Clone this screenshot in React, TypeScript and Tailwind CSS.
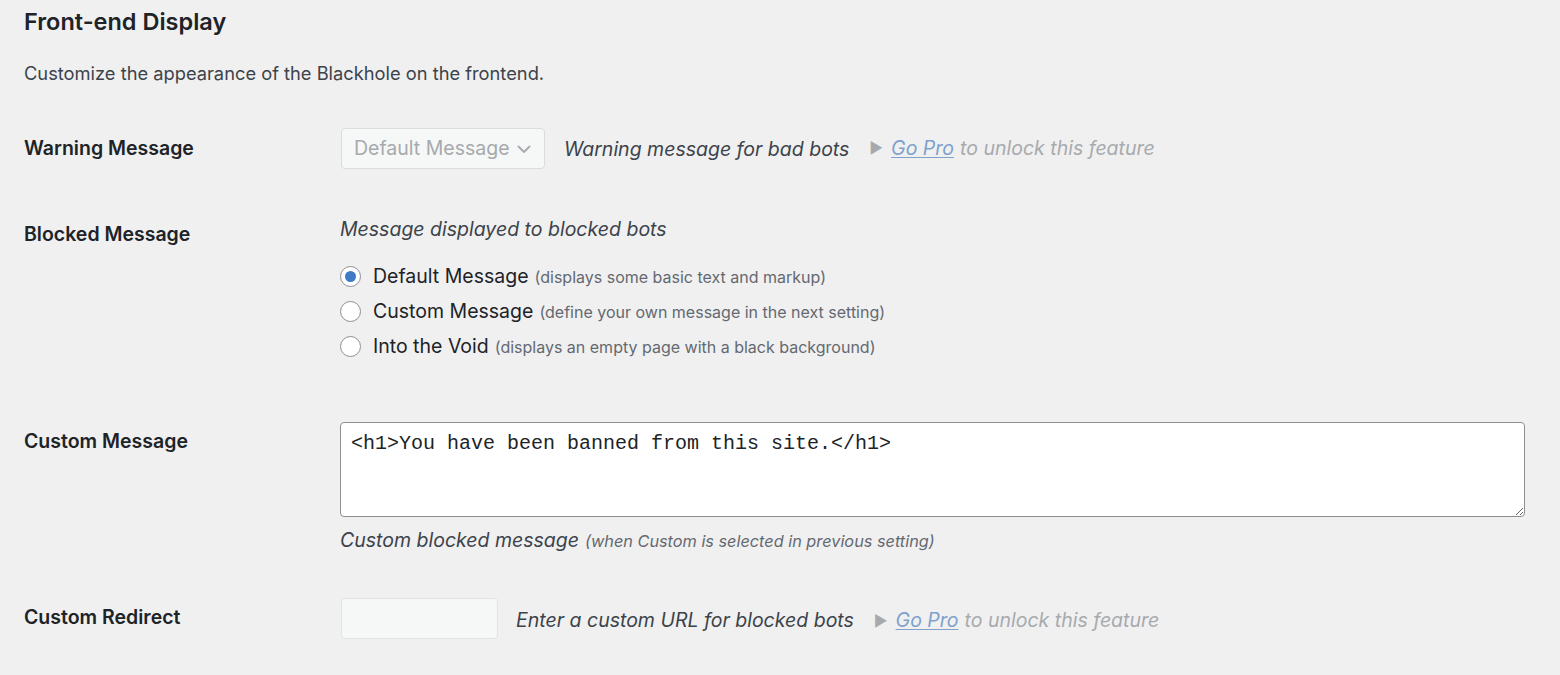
import React from 'react';

const ui = "font-['Inter','Liberation_Sans',sans-serif]";

const GoPro: React.FC = () => (
  <span className="ml-[20px] flex items-center italic text-[19.5px] text-[#a7aaad]">
    <span className="mr-[8px] text-[15px] not-italic">▶</span>
    <a href="#" className="text-[#7ea2cc] underline underline-offset-2">Go Pro</a>
    <span className="ml-[6px]">to unlock this feature</span>
  </span>
);

const Radio: React.FC<{ checked?: boolean; label: string; note: string }> = ({ checked, label, note }) => (
  <label className="flex h-[35px] items-center">
    <span className="flex h-[21px] w-[21px] items-center justify-center rounded-full border border-[#8c8f94] bg-white">
      {checked && <span className="h-[11px] w-[11px] rounded-full bg-[#3f7ac7]" />}
    </span>
    <span className="ml-[12px] text-[19.5px] text-[#1d2327]">{label}</span>
    <span className="ml-[6px] text-[16px] text-[#646970]">{note}</span>
  </label>
);

export default function App() {
  return (
    <div className={`${ui} min-h-[675px] w-full bg-[#f0f0f1] pl-[24px] text-[#1d2327]`}>
      <h2 className="pt-[8px] text-[23.5px] font-semibold leading-[28px]">Front-end Display</h2>
      <p className="mt-[25px] text-[18.3px] leading-[24px] text-[#3c434a]">
        Customize the appearance of the Blackhole on the frontend.
      </p>

      {/* Warning Message */}
      <div className="mt-[43px] flex items-center">
        <div className="w-[316px] pb-[2px] text-[19.5px] font-semibold leading-[24px]">Warning Message</div>
        <div className="flex items-center">
          <div className="ml-[1px] flex h-[41px] w-[204px] items-center justify-between rounded-[4px] border border-[#dcdcde] bg-[#f6f7f7] pl-[12px] pr-[10px] text-[19.5px] text-[#a7aaad]">
            <span>Default Message</span>
            <svg width="20" height="20" viewBox="0 0 20 20" fill="none" stroke="#a7aaad" strokeWidth="1.8" strokeLinecap="round" strokeLinejoin="round">
              <path d="M4.5 7.5 L10 13 L15.5 7.5" />
            </svg>
          </div>
          <span className="ml-[19px] pt-[3px] text-[19.5px] italic text-[#3c434a]">Warning message for bad bots</span>
          <GoPro />
        </div>
      </div>

      {/* Blocked Message */}
      <div className="mt-[48px] flex">
        <div className="w-[316px] pt-[5px] text-[19.5px] font-semibold leading-[24px]">Blocked Message</div>
        <div>
          <p className="text-[19.5px] italic leading-[24px] text-[#3c434a]">Message displayed to blocked bots</p>
          <div className="mt-[18px] flex flex-col">
            <Radio checked label="Default Message" note="(displays some basic text and markup)" />
            <Radio label="Custom Message" note="(define your own message in the next setting)" />
            <Radio label="Into the Void" note="(displays an empty page with a black background)" />
          </div>
        </div>
      </div>

      {/* Custom Message */}
      <div className="mt-[58px] flex">
        <div className="w-[316px] pt-[7px] text-[19.5px] font-semibold leading-[24px]">Custom Message</div>
        <div>
          <textarea
            readOnly
            defaultValue="<h1>You have been banned from this site.</h1>"
            className="block h-[95px] w-[1185px] rounded-[4px] border border-[#8c8f94] bg-white px-[10px] py-[8px] font-['Liberation_Mono',monospace] text-[20px] leading-[26px] text-[#1d2327] outline-none"
          />
          <p className="mt-[11px] leading-[24px] italic text-[#3c434a]">
            <span className="text-[19.5px]">Custom blocked message</span>
            <span className="ml-[6px] text-[16.3px] text-[#646970]">(when Custom is selected in previous setting)</span>
          </p>
        </div>
      </div>

      {/* Custom Redirect */}
      <div className="mt-[45px] flex items-center">
        <div className="w-[316px] pb-[4px] text-[19.5px] font-semibold leading-[24px]">Custom Redirect</div>
        <div className="flex items-center">
          <div className="ml-[1px] h-[41px] w-[157px] rounded-[4px] border border-[#e2e3e5] bg-[#f6f7f7]" />
          <span className="ml-[18px] pt-[5px] text-[19.5px] italic text-[#3c434a]">Enter a custom URL for blocked bots</span>
          <span className="pt-[5px]">
            <GoPro />
          </span>
        </div>
      </div>
    </div>
  );
}
